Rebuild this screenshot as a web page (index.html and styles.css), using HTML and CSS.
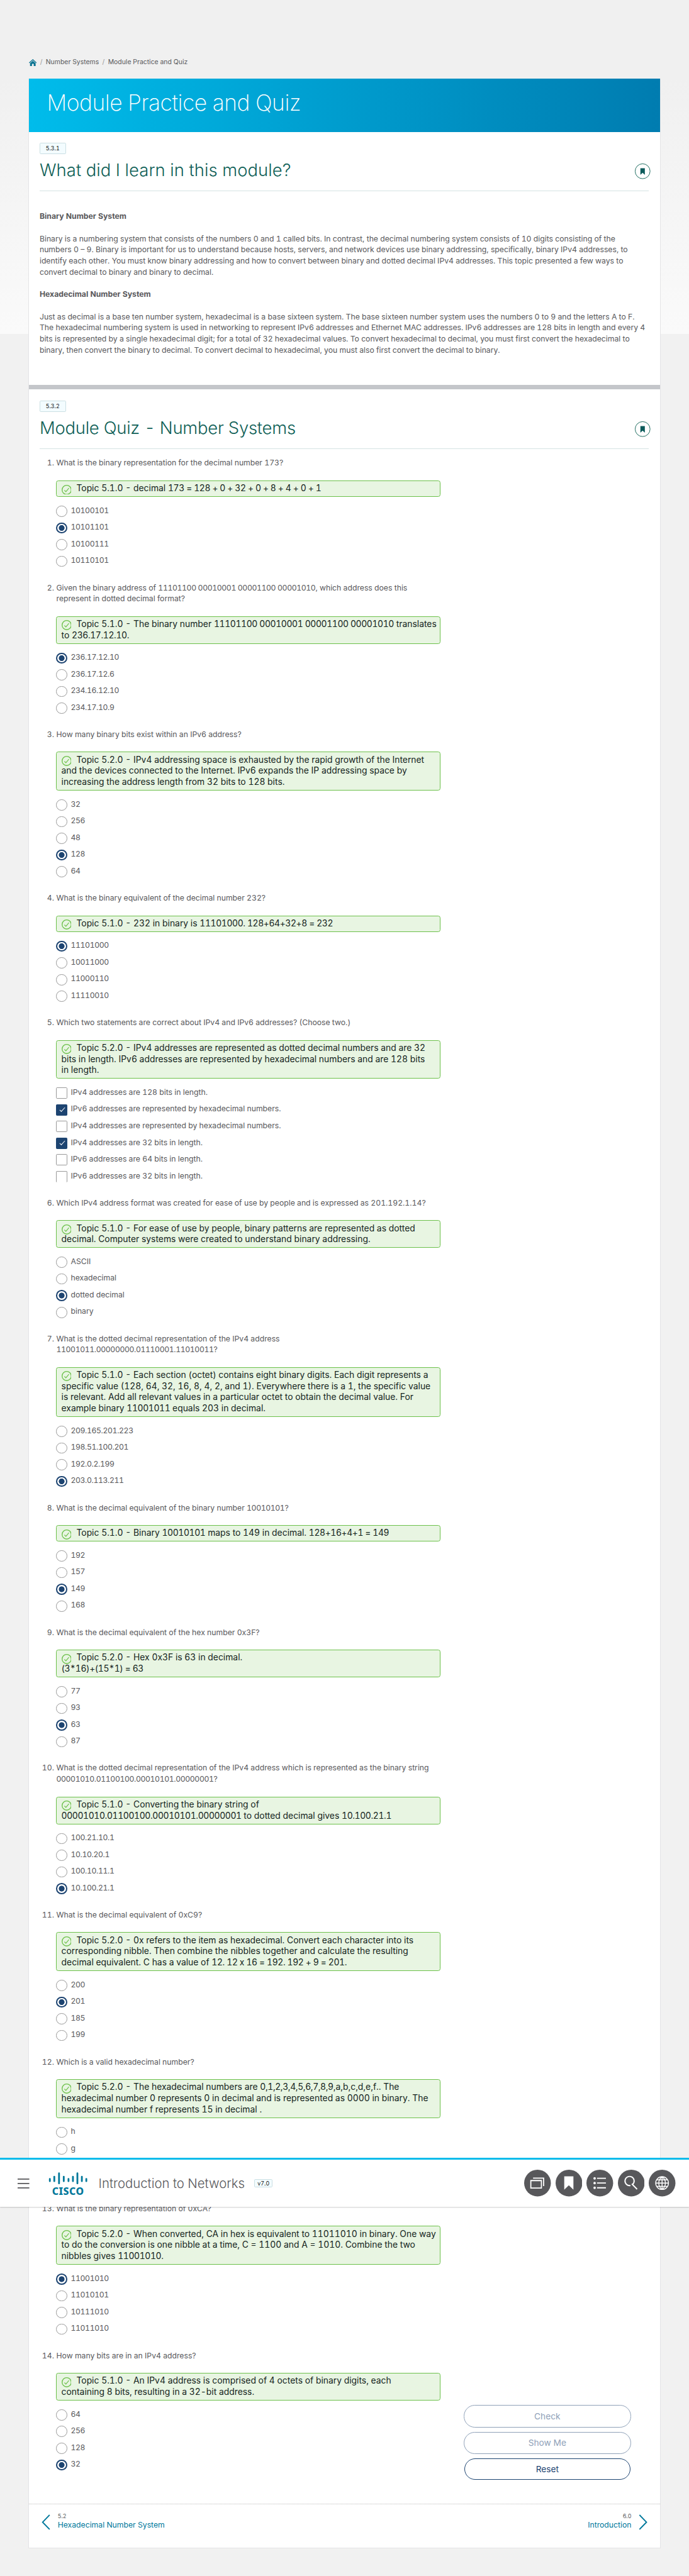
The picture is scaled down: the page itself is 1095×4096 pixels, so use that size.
FILE: index.html
```html
<!DOCTYPE html>
<html lang="en">
<head>
<meta charset="utf-8">
<title>Module Practice and Quiz</title>
<link rel="stylesheet" href="styles.css">
</head>
<body>
<svg width="0" height="0" class="defs">
<symbol id="check" viewBox="0 0 18 18"><circle cx="9" cy="9" r="8.2" fill="none" stroke="#6cc04a" stroke-width="1.5"/><path d="M5 9.6l2.6 2.6L13 5.8" fill="none" stroke="#6cc04a" stroke-width="1.3"/></symbol>
<symbol id="mark" viewBox="0 0 30 30"><circle cx="15" cy="15" r="13.4" fill="#fff" stroke="#1c6b5e" stroke-width="1.1"/><path d="M11 9.5h8v12l-4-3.6-4 3.6z" fill="#0b5a5a"/></symbol>
</svg>
<div class="page">
<nav class="crumbs">
<svg class="home" viewBox="0 0 14 13"><path d="M7 0L0 6.3l1 1L7 2l6 5.300 1-1z" fill="#0a7391"/><path d="M7 3L2 7.400V12.500h3.400V8.500h3.200v4H12V7.400z" fill="#0a7391"/></svg>
<i>/</i><span>Number Systems</span><i>/</i><span>Module Practice and Quiz</span>
</nav>
<main class="panel">
<header class="banner"><h1>Module Practice and Quiz</h1></header>
<section class="topic summary">
<span class="tag">5.3.1</span>
<div class="head"><h2>What did I learn in this module?</h2><svg class="mark"><use href="#mark"/></svg></div>
<div class="copy">
<p><b>Binary Number System</b></p>
<p>Binary is a numbering system that consists of the numbers 0 and 1 called bits. In contrast, the decimal numbering system consists of 10 digits consisting of the<br>numbers 0 – 9. Binary is important for us to understand because hosts, servers, and network devices use binary addressing, specifically, binary IPv4 addresses, to<br>identify each other. You must know binary addressing and how to convert between binary and dotted decimal IPv4 addresses. This topic presented a few ways to<br>convert decimal to binary and binary to decimal.</p>
<p><b>Hexadecimal Number System</b></p>
<p>Just as decimal is a base ten number system, hexadecimal is a base sixteen system. The base sixteen number system uses the numbers 0 to 9 and the letters A to F.<br>The hexadecimal numbering system is used in networking to represent IPv6 addresses and Ethernet MAC addresses. IPv6 addresses are 128 bits in length and every 4<br>bits is represented by a single hexadecimal digit; for a total of 32 hexadecimal values. To convert hexadecimal to decimal, you must first convert the hexadecimal to<br>binary, then convert the binary to decimal. To convert decimal to hexadecimal, you must also first convert the decimal to binary.</p>
</div>
</section>
<section class="topic quiz">
<span class="tag">5.3.2</span>
<div class="head"><h2>Module Quiz - Number Systems</h2><svg class="mark"><use href="#mark"/></svg></div>
<ol class="questions">
<li><p class="q">What is the binary representation for the decimal number 173?</p>
<p class="note"><svg><use href="#check"/></svg>Topic 5.1.0 - decimal <span class="num">173 = 128 + 0 + 32 + 0 + 8 + 4 + 0 + 1</span></p>
<ul class="num"><li>10100101</li><li class="on">10101101</li><li>10100111</li><li>10110101</li></ul></li>
<li><p class="q">Given the binary address of <span class="num">11101100 00010001 00001100 00001010</span>, which address does this<br>represent in dotted decimal format?</p>
<p class="note"><svg><use href="#check"/></svg>Topic 5.1.0 - The binary number <span class="num">11101100 00010001 00001100 00001010</span> translates<br>to <span class="num">236.17.12.10.</span></p>
<ul class="num"><li class="on">236.17.12.10</li><li>236.17.12.6</li><li>234.16.12.10</li><li>234.17.10.9</li></ul></li>
<li><p class="q">How many binary bits exist within an IPv6 address?</p>
<p class="note"><svg><use href="#check"/></svg>Topic 5.2.0 - IPv4 addressing space is exhausted by the rapid growth of the Internet<br>and the devices connected to the Internet. IPv6 expands the IP addressing space by<br>increasing the address length from 32 bits to 128 bits.</p>
<ul class="num"><li>32</li><li>256</li><li>48</li><li class="on">128</li><li>64</li></ul></li>
<li><p class="q">What is the binary equivalent of the decimal number 232?</p>
<p class="note"><svg><use href="#check"/></svg>Topic 5.1.0 - 232 in binary is <span class="num">11101000. 128+64+32+8 = 232</span></p>
<ul class="num"><li class="on">11101000</li><li>10011000</li><li>11000110</li><li>11110010</li></ul></li>
<li><p class="q">Which two statements are correct about IPv4 and IPv6 addresses? (Choose two.)</p>
<p class="note"><svg><use href="#check"/></svg>Topic 5.2.0 - IPv4 addresses are represented as dotted decimal numbers and are 32<br>bits in length. IPv6 addresses are represented by hexadecimal numbers and are 128 bits<br>in length.</p>
<ul class="boxes"><li>IPv4 addresses are 128 bits in length.</li><li class="on">IPv6 addresses are represented by hexadecimal numbers.</li><li>IPv4 addresses are represented by hexadecimal numbers.</li><li class="on">IPv4 addresses are 32 bits in length.</li><li>IPv6 addresses are 64 bits in length.</li><li class="cut">IPv6 addresses are 32 bits in length.</li></ul></li>
<li><p class="q">Which IPv4 address format was created for ease of use by people and is expressed as 201.192.1.14?</p>
<p class="note"><svg><use href="#check"/></svg>Topic 5.1.0 - For ease of use by people, binary patterns are represented as dotted<br>decimal. Computer systems were created to understand binary addressing.</p>
<ul><li>ASCII</li><li>hexadecimal</li><li class="on">dotted decimal</li><li>binary</li></ul></li>
<li><p class="q">What is the dotted decimal representation of the IPv4 address<br><span class="num">11001011.00000000.01110001.11010011?</span></p>
<p class="note"><svg><use href="#check"/></svg>Topic 5.1.0 - Each section (octet) contains eight binary digits. Each digit represents a<br>specific value (128, 64, 32, 16, 8, 4, 2, and 1). Everywhere there is a 1, the specific value<br>is relevant. Add all relevant values in a particular octet to obtain the decimal value. For<br>example binary <span class="num">11001011</span> equals 203 in decimal.</p>
<ul class="num"><li>209.165.201.223</li><li>198.51.100.201</li><li>192.0.2.199</li><li class="on">203.0.113.211</li></ul></li>
<li><p class="q">What is the decimal equivalent of the binary number <span class="num">10010101</span>?</p>
<p class="note"><svg><use href="#check"/></svg>Topic 5.1.0 - Binary <span class="num">10010101</span> maps to 149 in decimal. <span class="num">128+16+4+1 = 149</span></p>
<ul class="num"><li>192</li><li>157</li><li class="on">149</li><li>168</li></ul></li>
<li><p class="q">What is the decimal equivalent of the hex number 0x3F?</p>
<p class="note"><svg><use href="#check"/></svg>Topic 5.2.0 - Hex 0x3F is 63 in decimal.<br><span class="num">(3*16)+(15*1) = 63</span></p>
<ul class="num"><li>77</li><li>93</li><li class="on">63</li><li>87</li></ul></li>
<li><p class="q">What is the dotted decimal representation of the IPv4 address which is represented as the binary string<br><span class="num">00001010.01100100.00010101.00000001?</span></p>
<p class="note"><svg><use href="#check"/></svg>Topic 5.1.0 - Converting the binary string of<br><span class="num">00001010.01100100.00010101.00000001</span> to dotted decimal gives <span class="num">10.100.21.1</span></p>
<ul class="num"><li>100.21.10.1</li><li>10.10.20.1</li><li>100.10.11.1</li><li class="on">10.100.21.1</li></ul></li>
<li><p class="q">What is the decimal equivalent of 0xC9?</p>
<p class="note"><svg><use href="#check"/></svg>Topic 5.2.0 - 0x refers to the item as hexadecimal. Convert each character into its<br>corresponding nibble. Then combine the nibbles together and calculate the resulting<br>decimal equivalent. C has a value of <span class="num">12. 12 x 16 = 192. 192 + 9 = 201.</span></p>
<ul class="num"><li>200</li><li class="on">201</li><li>185</li><li>199</li></ul></li>
<li><p class="q">Which is a valid hexadecimal number?</p>
<p class="note"><svg><use href="#check"/></svg>Topic 5.2.0 - The hexadecimal numbers are <span class="num">0,1,2,3,4,5,6,7,8,9</span>,a,b,c,d,e,f.. The<br>hexadecimal number 0 represents 0 in decimal and is represented as 0000 in binary. The<br>hexadecimal number f represents 15 in decimal .</p>
<ul class="covered"><li>h</li><li>g</li></ul></li>
<li><p class="q">What is the binary representation of 0xCA?</p>
<p class="note"><svg><use href="#check"/></svg>Topic 5.2.0 - When converted, CA in hex is equivalent to 11011010 in binary. One way<br>to do the conversion is one nibble at a time, C = 1100 and A = 1010. Combine the two<br>nibbles gives <span class="num">11001010.</span></p>
<ul class="num"><li class="on">11001010</li><li>11010101</li><li>10111010</li><li>11011010</li></ul></li>
<li><p class="q">How many bits are in an IPv4 address?</p>
<p class="note"><svg><use href="#check"/></svg>Topic 5.1.0 - An IPv4 address is comprised of 4 octets of binary digits, each<br>containing 8 bits, resulting in a 32-bit address.</p>
<div class="last"><ul class="num"><li>64</li><li>256</li><li>128</li><li class="on">32</li></ul>
<div class="actions"><button class="off">Check</button><button class="off">Show Me</button><button class="reset">Reset</button></div></div></li>
</ol>
</section>
<footer class="pager">
<a class="prev"><svg viewBox="0 0 16 28"><path d="M14.500 1L2 14l12.500 13" fill="none" stroke="#00789b" stroke-width="2.200"/></svg><span><small>5.2</small>Hexadecimal Number System</span></a>
<a class="next"><span><small>6.0</small>Introduction</span><svg viewBox="0 0 16 28"><path d="M1.500 1L14 14 1.500 27" fill="none" stroke="#00789b" stroke-width="2.200"/></svg></a>
</footer>
</main>
<header class="bar">
<svg class="burger" viewBox="0 0 21 20"><path d="M0 2h21M0 10h21M0 18h21" stroke="#58585b" stroke-width="2"/></svg>
<svg class="logo" viewBox="0 0 70 42"><g stroke="#00789b" stroke-width="3.200" stroke-linecap="round"><path d="M2.500 12v4M10.500 8v8M19 2v18M27.500 8v8M36 12v4M44 8v8M52 2v18M60 8v8M68 12v4"/></g><text x="6.500" y="40.500" textLength="57" class="logotype">CISCO</text></svg>
<span class="course">Introduction to Networks</span>
<span class="tag ver">v7.0</span>
<div class="tools">
<svg viewBox="0 0 48 48"><circle cx="24" cy="24" r="24"/><path class="l" d="M12 19.500h19v13.500h-19zM16 15h19v14.500" stroke-width="2"/></svg>
<svg viewBox="0 0 48 48"><circle cx="24" cy="24" r="24"/><path d="M15.500 12h16.500v24l-8.250-8-8.250 8z" fill="#fff"/></svg>
<svg viewBox="0 0 48 48"><circle cx="24" cy="24" r="24"/><path class="l" d="M19 15.500h16M19 24h16M19 32.500h16" stroke-width="2"/><g fill="#fff"><path d="M12.500 15.500a2.200 2.200 0 1 0 4.400 0a2.200 2.200 0 1 0-4.400 0M12.500 24a2.200 2.200 0 1 0 4.400 0a2.200 2.200 0 1 0-4.400 0M12.500 32.500a2.200 2.200 0 1 0 4.400 0a2.200 2.200 0 1 0-4.400 0"/></g></svg>
<svg viewBox="0 0 48 48"><circle cx="24" cy="24" r="24"/><path class="l" d="M22.500 28.300a8.200 8.200 0 1 1 4.300-2.300M25 25.500L34.500 35" stroke-width="2.200"/></svg>
<svg viewBox="0 0 48 48"><circle cx="24" cy="24" r="24"/><path class="l" d="M12.500 24a11.500 11.500 0 1 0 23 0a11.500 11.500 0 1 0-23 0zM24 12.500v23M12.500 24h23M14.500 18h19M14.500 30h19M24 12.500c-8 6-8 17 0 23M24 12.500c8 6 8 17 0 23" stroke-width="1.600"/></svg>
</div>
</header>
</div>
</body>
</html>
```
FILE: styles.css
```css
*, *::before, *::after { box-sizing: border-box; margin: 0; padding: 0; }
html, body { width: 1095px; height: 4096px; overflow: hidden; }
body { position: relative; background: #f1f1f1; font-family: Inter, "Liberation Sans", sans-serif; color: #58585b; }
.defs { position: absolute; }
.page { zoom: .885; width: 1237.3px; height: 4629px; position: relative; font-size: 13.8px; font-variant-numeric: tabular-nums; line-height: 20px; white-space: nowrap; background: linear-gradient(#f0f0f0 0, #f0f0f0 140px, #fafafa 600px, #f1f1f1 600px); }
.num { letter-spacing: -.42px; }
.crumbs { display: flex; align-items: flex-start; height: 141px; padding: 84px 0 0 52px; font-size: 11.8px; line-height: 57px; }
.crumbs .home { width: 14px; height: 13px; margin-top: 22px; }
.crumbs i { margin: 0 6px; font-style: normal; color: #999; }
.panel { margin-left: 51px; width: 1135px; height: 4438px; background: #fff; border: 1px solid #e4e4e6; border-top: 0; }
.banner { height: 96px; padding-left: 32px; margin-right: -1px; background: linear-gradient(90deg, #00bceb, #007cb0); color: #fff; }
h1 { font-weight: 200; font-size: 40px; letter-spacing: -.55px; line-height: 88px; }
.topic { padding: 20px 20px 0 19px; }
.tag { display: block; width: 47px; height: 20px; border: 1px solid #cbdfe3; border-bottom-width: 2px; border-radius: 2px; background: #f3fcff; color: #111; font-size: 10px; line-height: 17px; text-align: center; }
.summary { height: 463px; border-bottom: 8px solid #c4c6ca; }
.head { display: flex; justify-content: space-between; height: 66px; border-bottom: 1px solid #d5e3e3; margin-top: 1px; }
h2 { font-weight: 300; font-size: 31px; letter-spacing: .1px; line-height: 56px; color: #0f5f57; }
.quiz h2 { letter-spacing: -.25px; }
.mark { width: 30px; height: 30px; margin: 15px -4px 0 0; }
.copy { padding-top: 35px; }
.copy p { margin-bottom: 20px; }
.questions { list-style: none; counter-reset: q; padding: 15px 0 0 30px; }
.questions > li { counter-increment: q; margin-bottom: 22.220px; }
.q { position: relative; margin-bottom: 21.200px; }
.q::before { content: counter(q) "."; position: absolute; right: 100%; margin-right: 4px; }
.note { width: 690px; padding: 3.720px 8px; border: 1px solid #6cc04a; border-radius: 4px; background: #e8f5e2; color: #14241c; font-size: 15.700px; margin-bottom: 10.800px; }
.note svg { width: 18px; height: 18px; margin: -3px 9px -3px 0; vertical-align: -3px; }
ul { list-style: none; }
ul li { position: relative; display: flex; align-items: flex-start; height: 30px; gap: 6px; line-height: 27px; }
ul li::before { content: ""; width: 20px; height: 20px; margin-top: 5px; border: 1px solid #999; border-radius: 50%; background: #fff; }
ul li.on::before { border: 2.500px solid #1d4471; background: radial-gradient(circle, #1d4471 4.800px, #fff 5.500px); }
.covered { padding-bottom: 60px; }
.boxes li::before { border-radius: 2px; }
.boxes li.on::before { background: #1d4471; }
.boxes li.on::after { content: ""; position: absolute; left: 8px; top: 9px; width: 5px; height: 10px; border: solid #fff; border-width: 0 1.700px 1.700px 0; transform: rotate(42deg); }
.boxes li.cut::before { border-bottom: 0; }
.last { display: flex; justify-content: space-between; }
.actions { display: flex; flex-direction: column; gap: 8px; width: 300px; margin: -2.500px 32px 0 0; }
.actions button { height: 40px; border: 1px solid #1d4471; border-radius: 20px; background: #fff; color: #1d4471; font: 15.500px Inter, sans-serif; }
.actions .off { border-color: #8fa1b8; color: #8fa1b8; }
.actions .reset { height: 38px; margin: 0 1px; }
.pager { display: flex; justify-content: space-between; height: 79px; margin-top: 43px; padding: 14px 21.500px 0 22px; border-top: 1px dotted #bbb; color: #00789b; }
.pager a { display: flex; gap: 13.500px; line-height: 16px; }
.pager small { display: block; font-size: 10px; color: #58585b; }
.pager svg { width: 16px; height: 28px; margin-top: 4px; }
.next { text-align: right; }
.bar { position: absolute; left: 0; top: 3877px; width: 100%; height: 87.500px; border-top: 4px solid #00bceb; background: #fff; box-shadow: 0 1px 2px #0003; display: flex; align-items: center; padding: 0 24px 0 32px; }
.burger { width: 21px; height: 20px; }
.logo { width: 70px; height: 42px; margin: 2px 20px 0 34px; overflow: visible; }
.logotype { font: 800 18px "Noto Sans", sans-serif; fill: #00789b; }
.course { font-weight: 300; font-size: 23px; }
.ver { width: 33px; height: 15px; margin-left: 17px; line-height: 13px; }
.tools { display: flex; gap: 8px; margin-left: auto; }
.tools svg { width: 48px; height: 48px; fill: #58585b; }
.tools .l { fill: none; stroke: #fff; }
```
